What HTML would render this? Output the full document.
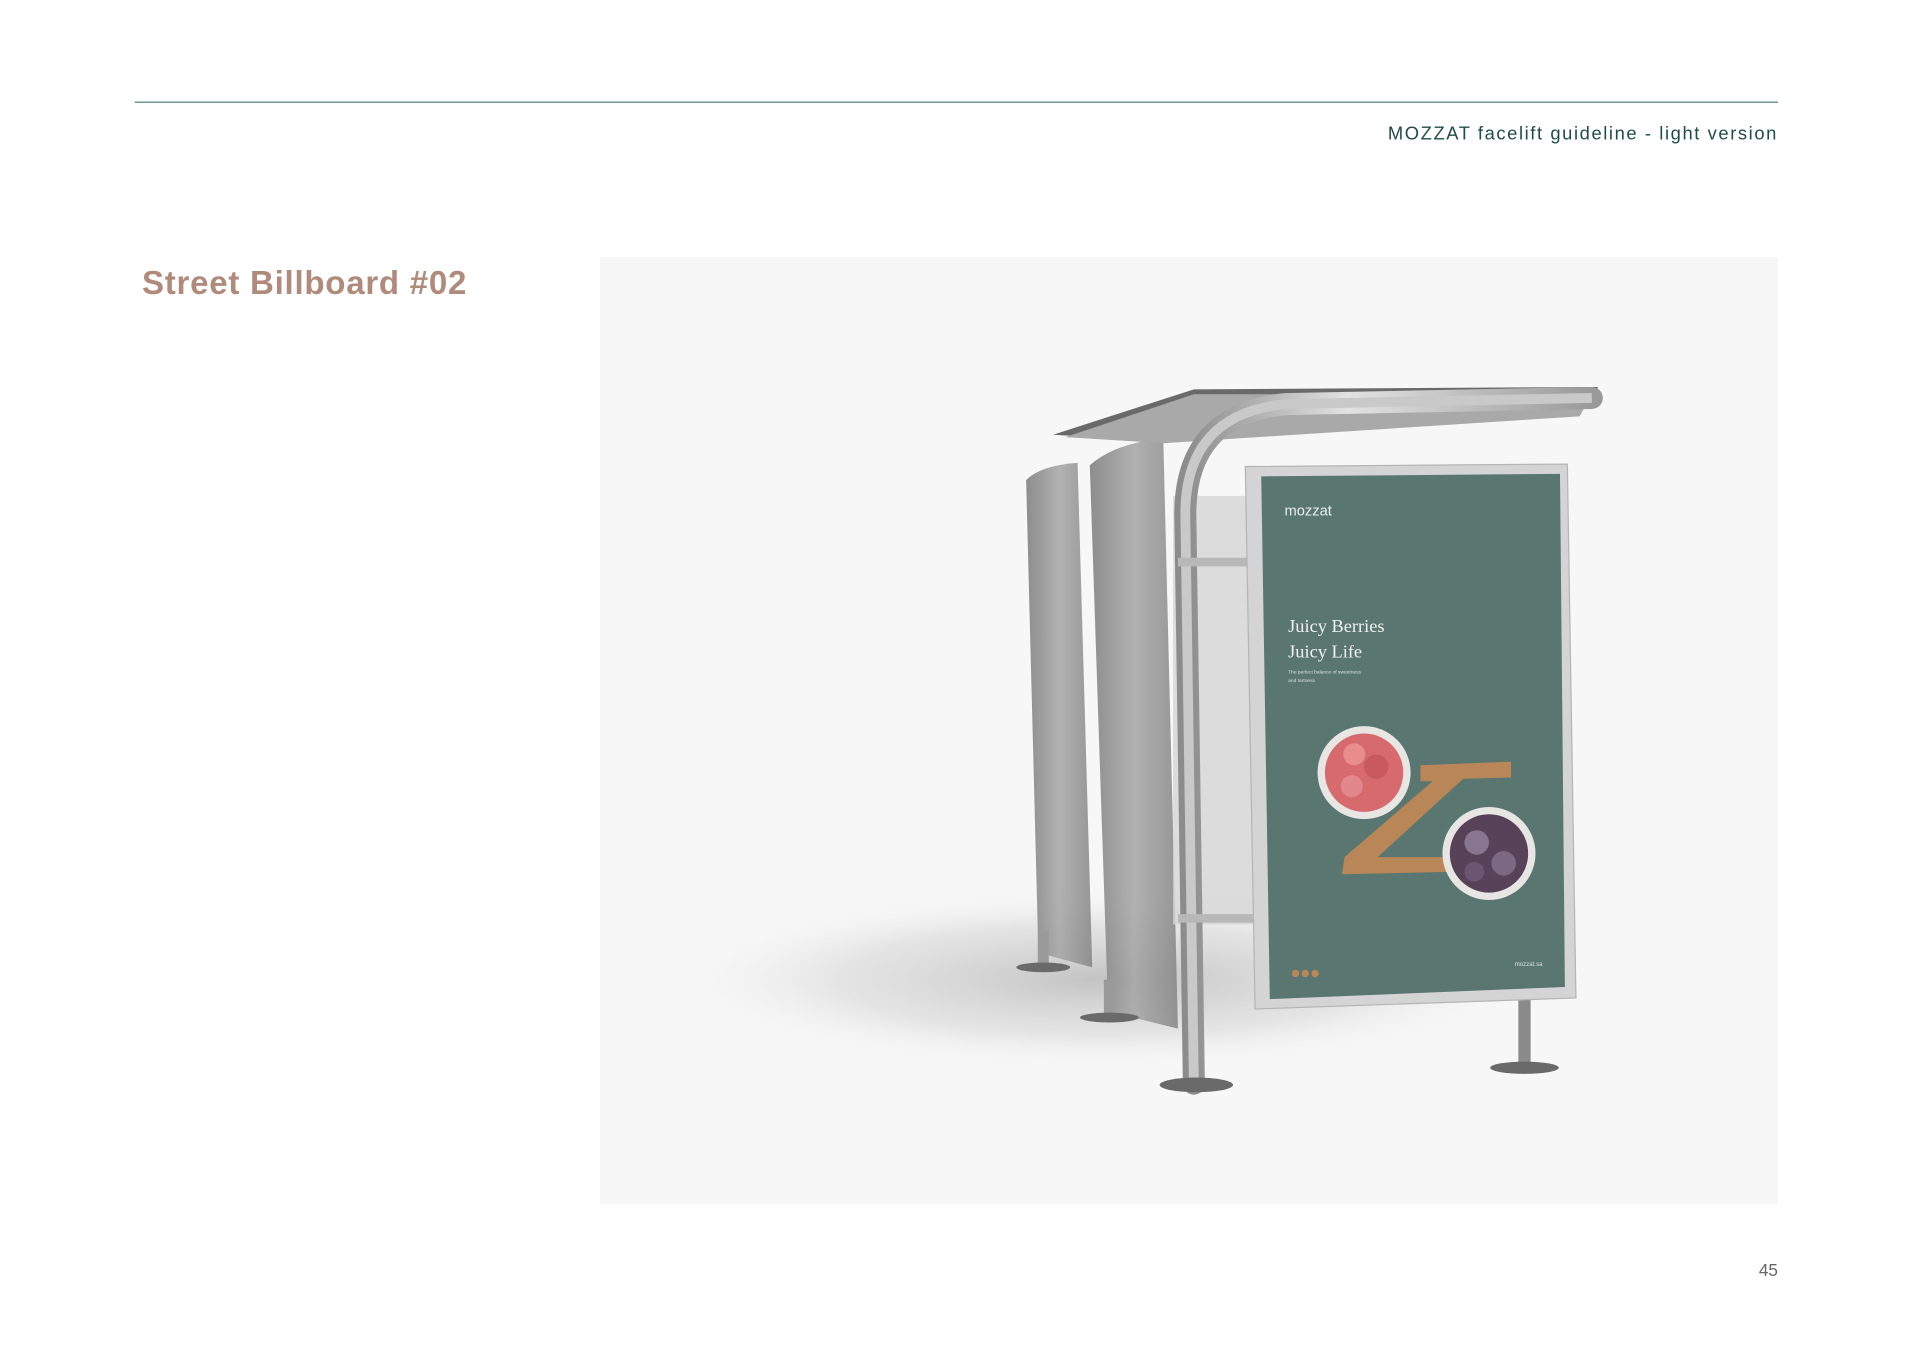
<!DOCTYPE html>
<html><head><meta charset="utf-8"><style>
html,body{margin:0;padding:0;background:#fff;}
body{width:1920px;height:1357px;position:relative;overflow:hidden;font-family:"Liberation Sans",sans-serif;}
svg{position:absolute;left:0;top:0;}
</style></head><body>
<svg width="1920" height="1357" viewBox="0 0 1920 1357">
<defs>
<radialGradient id="sh" cx="0.5" cy="0.5" r="0.5">
<stop offset="0" stop-color="#bdbdbd" stop-opacity="0.9"/>
<stop offset="0.6" stop-color="#d8d8d8" stop-opacity="0.6"/>
<stop offset="1" stop-color="#f7f7f7" stop-opacity="0"/>
</radialGradient>
<linearGradient id="pole" x1="0" x2="1">
<stop offset="0" stop-color="#8c8c8c"/><stop offset="0.4" stop-color="#e2e2e2"/><stop offset="1" stop-color="#9a9a9a"/>
</linearGradient>
<linearGradient id="glass" x1="0" x2="1">
<stop offset="0" stop-color="#7a7a7a"/><stop offset="0.5" stop-color="#a5a5a5"/><stop offset="1" stop-color="#858585"/>
</linearGradient>
</defs>
<g transform="scale(1.22449)">
<line x1="110" y1="83.5" x2="1452" y2="83.5" stroke="#6f9790" stroke-width="1.2"/>
<text x="1452" y="114" text-anchor="end" font-family="Liberation Sans" font-size="15" fill="#1f4c47" letter-spacing="1.3">MOZZAT facelift guideline - light version</text>
<text x="116" y="240" font-family="Liberation Sans" font-weight="bold" font-size="27" fill="#b08b7c" letter-spacing="0.6">Street Billboard #02</text>
<rect x="490" y="210" width="962" height="773" fill="#f7f7f7"/>
<text x="1452" y="1042" text-anchor="end" font-size="14" fill="#666">45</text>
<ellipse cx="900" cy="800" rx="360" ry="75" fill="url(#sh)"/>
<path d="M838 392 Q850 380 880 378 L892 790 L848 778 Z" fill="url(#glass)" opacity="0.85"/>
<path d="M890 380 Q910 362 950 358 L962 840 L905 826 Z" fill="url(#glass)" opacity="0.85"/>
<rect x="958" y="405" width="70" height="350" fill="#d5d5d5" opacity="0.8"/>
<path d="M860 355 L975 318 L1305 316 L1300 330 L945 360 Z" fill="#6a6a6a"/>
<path d="M870 357 L975 322 L1300 322 L1290 340 L950 362 Z" fill="#a9a9a9"/>
<path d="M975 885 L968 420 Q968 338 1050 330 L1300 325" fill="none" stroke="url(#pole)" stroke-width="18" stroke-linecap="round"/>
<path d="M975 885 L968 420 Q968 338 1050 330 L1300 325" fill="none" stroke="#c9c9c9" stroke-width="8"/>
<line x1="962" y1="459" x2="1025" y2="459" stroke="#b8b8b8" stroke-width="7"/>
<line x1="962" y1="750" x2="1025" y2="750" stroke="#b8b8b8" stroke-width="7"/>
<line x1="852" y1="760" x2="852" y2="790" stroke="#9a9a9a" stroke-width="9"/>
<line x1="906" y1="800" x2="906" y2="830" stroke="#9a9a9a" stroke-width="9"/>
<line x1="1245" y1="815" x2="1245" y2="870" stroke="#8a8a8a" stroke-width="10"/>
<ellipse cx="852" cy="790" rx="22" ry="4" fill="#6a6a6a"/>
<ellipse cx="906" cy="831" rx="24" ry="4" fill="#6a6a6a"/>
<ellipse cx="977" cy="886" rx="30" ry="6" fill="#6a6a6a"/>
<ellipse cx="1245" cy="872" rx="28" ry="5" fill="#6a6a6a"/>
<polygon points="1017,381 1280,379 1287,815 1025,824" fill="#d4d4d4" stroke="#b5b5b5"/>
<polygon points="1030,389 1274,387 1278,806 1037,816" fill="#5a7670"/>
<text x="1049" y="421" font-size="12" fill="#e9efee">mozzat</text>
<text x="1052" y="516" font-family="Liberation Serif" font-size="15" fill="#f2f2f2">Juicy Berries</text>
<text x="1052" y="537" font-family="Liberation Serif" font-size="15" fill="#f2f2f2">Juicy Life</text>
<text x="1052" y="550" font-size="4" fill="#d9e1df">The perfect balance of sweetness</text>
<text x="1052" y="557" font-size="4" fill="#d9e1df">and tartness</text>
<polygon points="1160,625 1234,622 1234,635 1195,636 1125,700 1185,700 1185,712 1096,714 1098,700 1170,638 1160,638" fill="#b98657"/>
<circle cx="1114" cy="631" r="38" fill="#e8e6e3"/>
<circle cx="1114" cy="631" r="32" fill="#d76a6c"/>
<circle cx="1106" cy="616" r="9" fill="#e88c8c"/><circle cx="1124" cy="626" r="10" fill="#c85a5e"/><circle cx="1104" cy="642" r="9" fill="#e2878a"/>
<circle cx="1216" cy="697" r="38" fill="#e8e6e3"/>
<circle cx="1216" cy="697" r="32" fill="#584259"/>
<circle cx="1206" cy="688" r="10" fill="#8a7590"/><circle cx="1228" cy="705" r="10" fill="#7d6884"/><circle cx="1204" cy="712" r="8" fill="#6c5573"/>
<circle cx="1058" cy="795" r="3" fill="#b98657"/><circle cx="1066" cy="795" r="3" fill="#b98657"/><circle cx="1074" cy="795" r="3" fill="#b98657"/>
<text x="1237" y="789" font-size="5" fill="#d9e1df">mozzat.sa</text>
</g>
</svg>
</body></html>
